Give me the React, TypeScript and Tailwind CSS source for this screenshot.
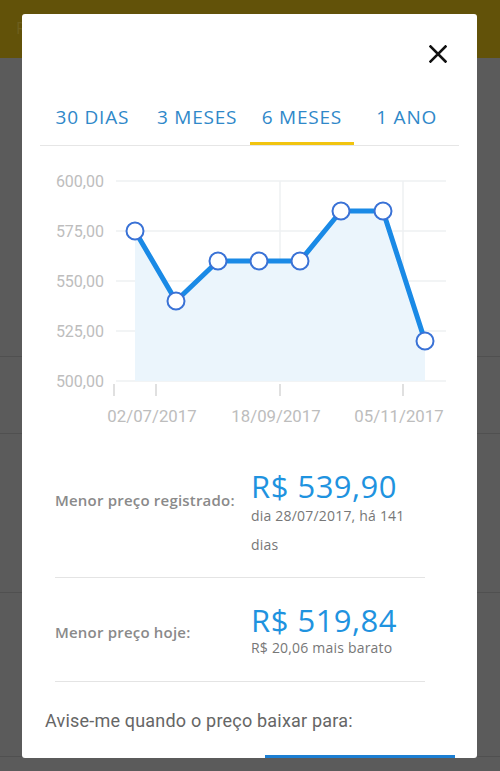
import React from "react";

const points = [
  { x: 95, v: 575 },
  { x: 136, v: 540 },
  { x: 178, v: 560 },
  { x: 219, v: 560 },
  { x: 260, v: 560 },
  { x: 301, v: 585 },
  { x: 343, v: 585 },
  { x: 385, v: 520 },
];

const yOf = (v: number) => 35 + (600 - v) * 2;

function PriceChart() {
  const line = points.map((p, i) => `${i ? "L" : "M"}${p.x},${yOf(p.v)}`).join(" ");
  const area = `${line} L385,235 L95,235 Z`;
  const labels = [600, 575, 550, 525, 500];

  return (
    <svg width="420" height="290" viewBox="0 0 420 290" className="block">
      {labels.map((v) => (
        <g key={v}>
          <line x1="76" x2="406" y1={yOf(v)} y2={yOf(v)} stroke="#eef0f2" strokeWidth="1.5" />
          <text
            x="64"
            y={yOf(v) + 6}
            textAnchor="end"
            fontSize="16"
            fill="#bdbdbd"
            fontFamily="Roboto, sans-serif"
          >
            {v},00
          </text>
        </g>
      ))}
      <line x1="240" x2="240" y1="35" y2="235" stroke="#eef0f2" strokeWidth="1.5" />
      <line x1="363" x2="363" y1="35" y2="235" stroke="#eef0f2" strokeWidth="1.5" />
      {[74, 116, 240, 363].map((x) => (
        <line key={x} x1={x} x2={x} y1="238" y2="250" stroke="#d6d6d6" strokeWidth="1.5" />
      ))}
      {[
        { x: 112, t: "02/07/2017" },
        { x: 236, t: "18/09/2017" },
        { x: 359, t: "05/11/2017" },
      ].map((d) => (
        <text
          key={d.t}
          x={d.x}
          y="276"
          textAnchor="middle"
          fontSize="16.8"
          fill="#bdbdbd"
          fontFamily="Roboto, sans-serif"
        >
          {d.t}
        </text>
      ))}
      <path d={area} fill="#ebf5fc" />
      <path d={line} fill="none" stroke="#1a8ae6" strokeWidth="5" strokeLinejoin="round" />
      {points.map((p) => (
        <circle key={p.x} cx={p.x} cy={yOf(p.v)} r="8.5" fill="#fff" stroke="#3a72d6" strokeWidth="2" />
      ))}
    </svg>
  );
}

export default function App() {
  const tabs = ["30 DIAS", "3 MESES", "6 MESES", "1 ANO"];

  return (
    <div className="relative h-[771px] w-[500px] overflow-hidden bg-[#5b5b5b] font-['Open_Sans',sans-serif]">
      {/* Background page (dimmed) */}
      <div className="h-[58px] bg-[#625209] pl-[16px] pt-[16px] text-[16px] text-[#6e5f1e]">R</div>
      <div className="h-[299px] border-b border-[#505050]" />
      <div className="h-[77px] border-b border-[#505050]" />
      <div className="h-[159px] border-b border-[#505050]" />
      <div className="h-[164px] border-b border-[#505050]" />

      {/* Modal */}
      <div className="absolute left-[22px] top-[14px] h-[744px] w-[455px] overflow-hidden rounded-[3px] bg-white">
        <div className="flex justify-end pr-[30px] pt-[31px]">
          <svg width="18" height="18" viewBox="0 0 18 18">
            <path d="M1.5 1.5 L16.5 16.5 M16.5 1.5 L1.5 16.5" stroke="#111" strokeWidth="2.6" strokeLinecap="square" />
          </svg>
        </div>

        <div className="mx-[18px] mt-[42px] grid grid-cols-4 border-b border-[#e6e6e6]">
          {tabs.map((t, i) => (
            <div key={t} className="flex flex-col items-center">
              <span className="whitespace-nowrap text-[19px] leading-[24px] tracking-[0.8px] text-[#2f88c9]">{t}</span>
              <div className={`mt-[13px] h-[3px] w-full ${i === 2 ? "bg-[#f1c40f]" : "bg-transparent"}`} />
            </div>
          ))}
        </div>

        <div className="ml-[18px]">
          <PriceChart />
        </div>

        <div className="ml-[33px] mr-[52px]">
          <div className="flex border-b border-[#e4e4e4] pb-[18px] pt-[32px]">
            <div className="mt-[22px] w-[196px] text-[15px] font-semibold leading-[20px] tracking-[0.2px] text-[#8a8a8a]">
              Menor preço registrado:
            </div>
            <div className="w-[160px]">
              <div className="text-[31px] font-medium leading-[36px] tracking-[0.5px] text-[#1f93df]">R$ 539,90</div>
              <div className="-mt-[3px] text-[14px] leading-[29px] tracking-[0.2px] text-[#777]">
                dia 28/07/2017, há 141 dias
              </div>
            </div>
          </div>

          <div className="flex border-b border-[#e4e4e4] pb-[23px] pt-[24px]">
            <div className="mt-[20px] w-[196px] text-[15px] font-semibold leading-[20px] tracking-[0.2px] text-[#8a8a8a]">
              Menor preço hoje:
            </div>
            <div>
              <div className="text-[31px] font-medium leading-[36px] tracking-[0.5px] text-[#1f93df]">R$ 519,84</div>
              <div className="text-[14px] leading-[20px] tracking-[0.2px] text-[#777]">R$ 20,06 mais barato</div>
            </div>
          </div>
        </div>

        <div className="ml-[23px] mt-[27px] font-['Roboto',sans-serif] text-[18px] leading-[24px] tracking-[0.2px] text-[#666]">
          Avise-me quando o preço baixar para:
        </div>
        <div className="ml-auto mr-[22px] mt-[22px] h-[40px] w-[190px] bg-[#1c7fd3]" />
      </div>
    </div>
  );
}
